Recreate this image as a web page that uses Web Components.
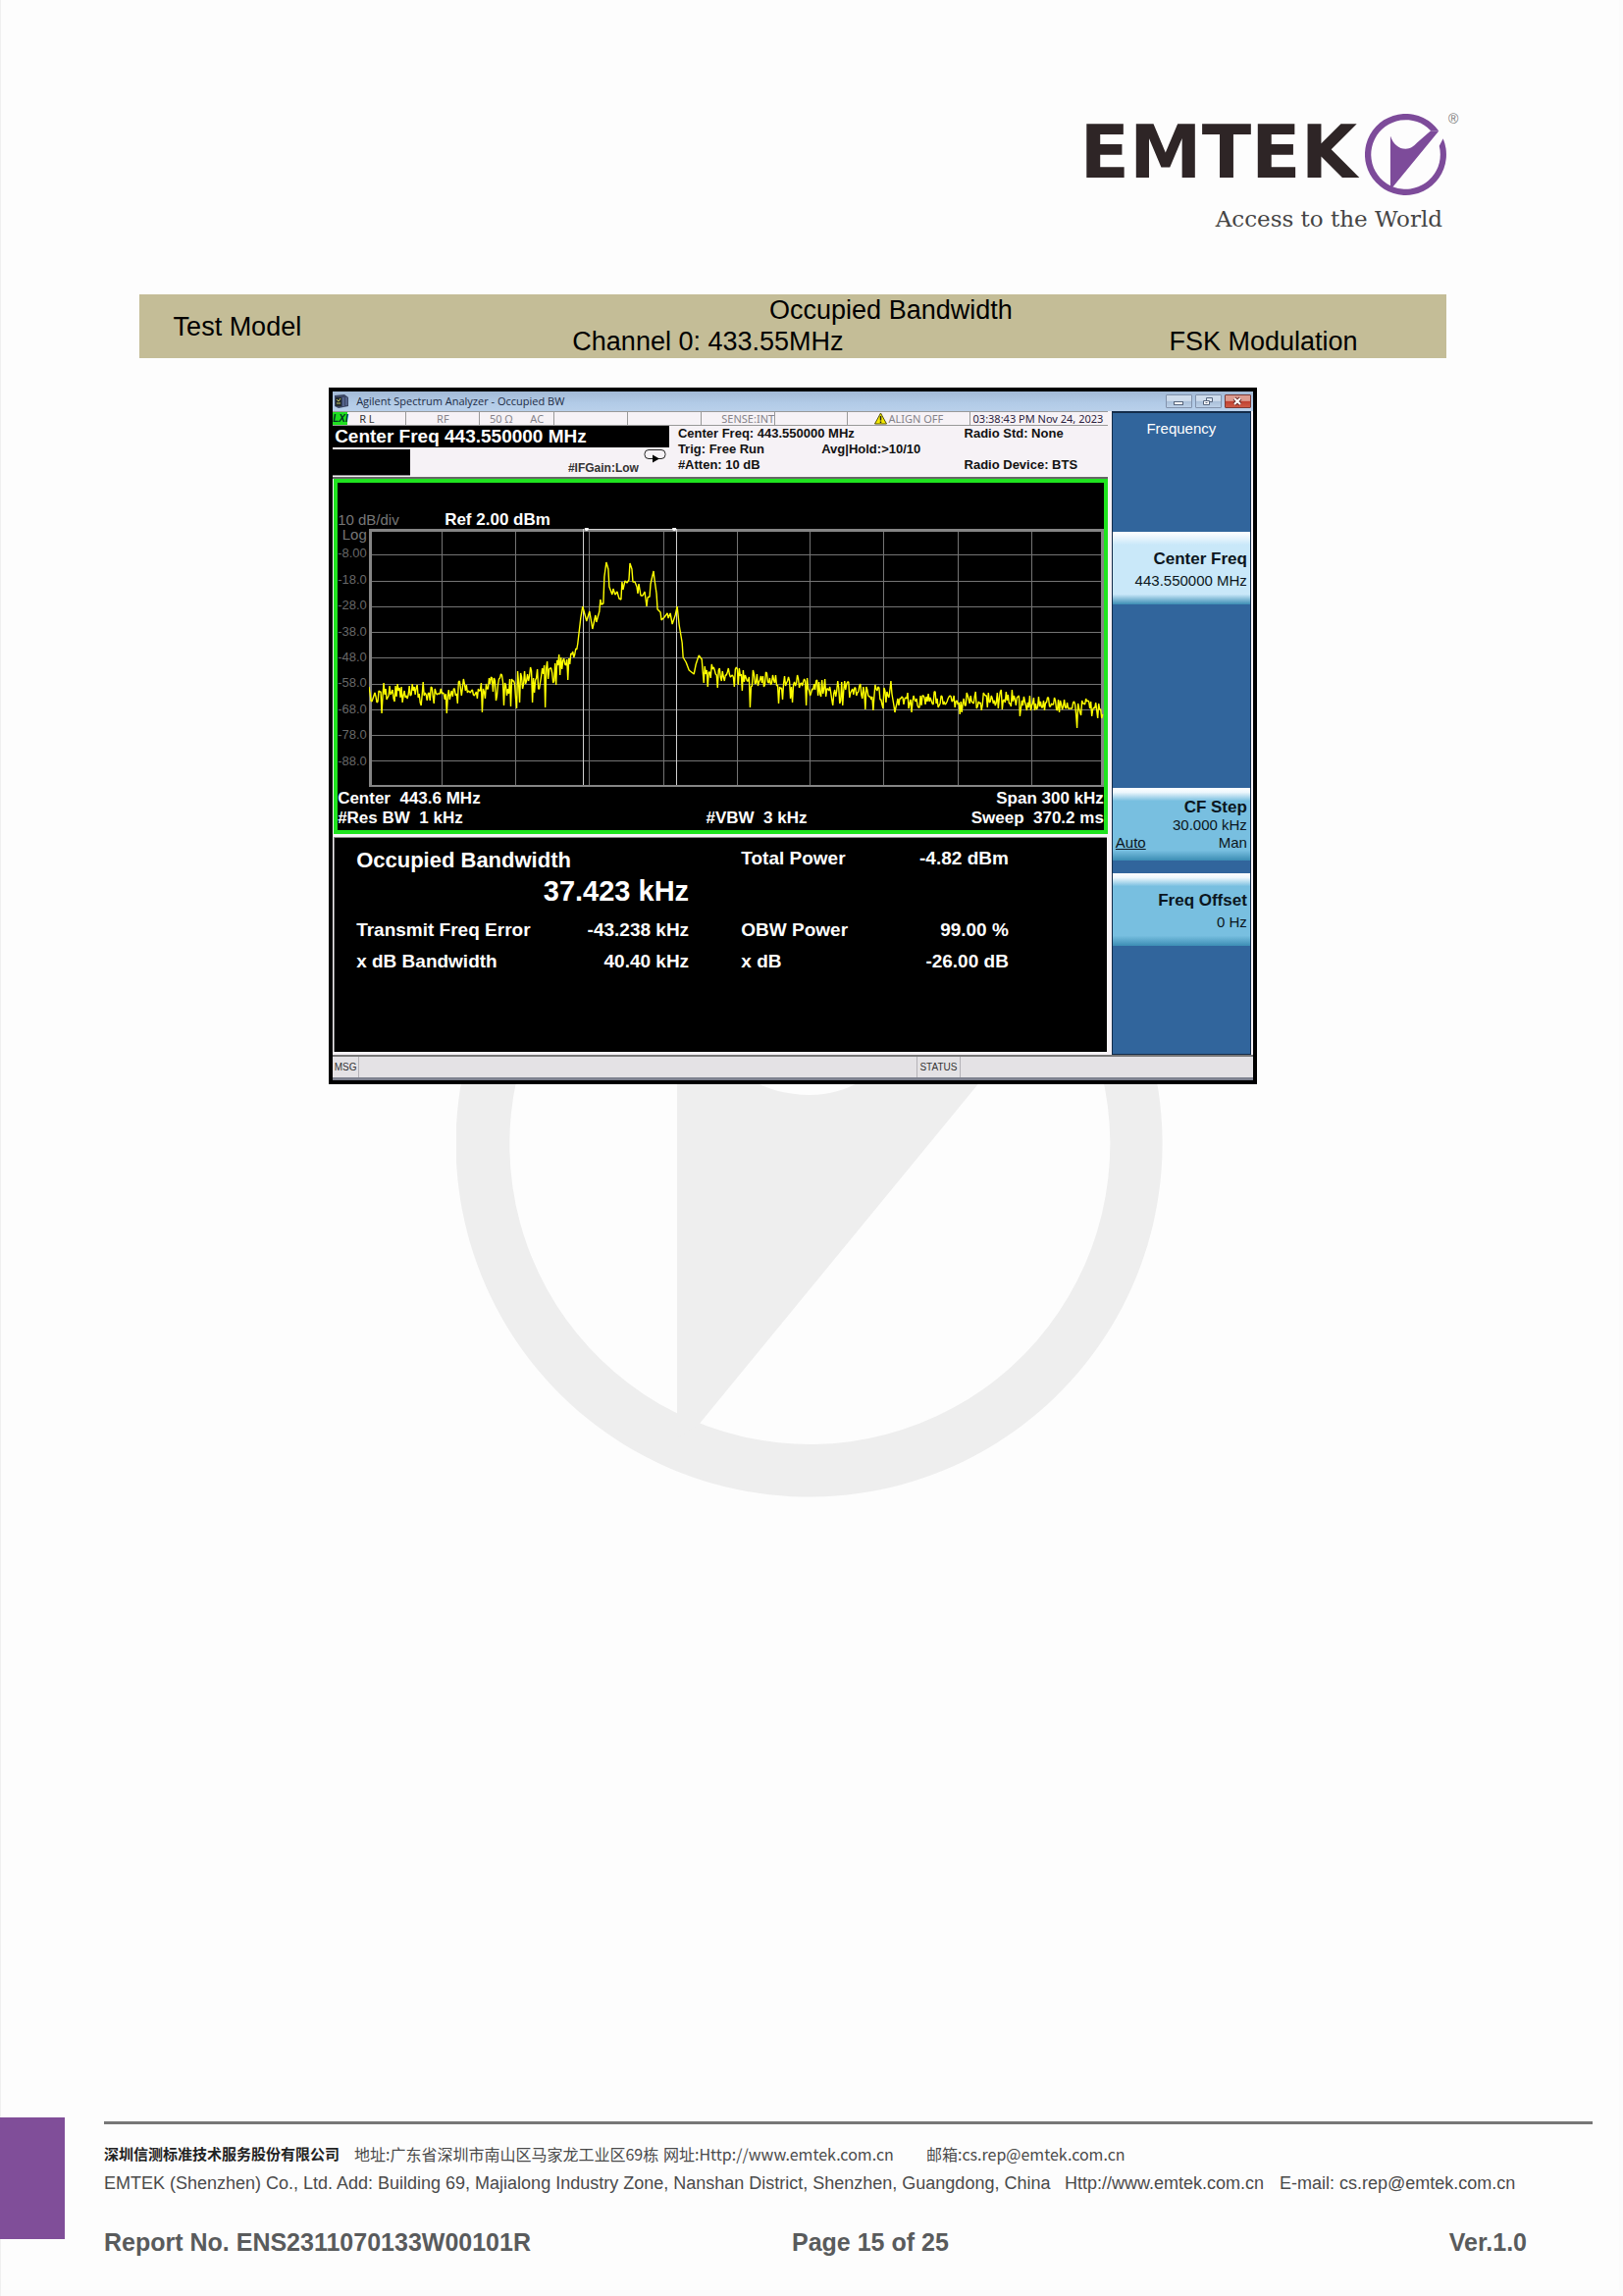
<!DOCTYPE html>
<html lang="en">
<head>
<meta charset="utf-8">
<title>Report No. ENS2311070133W00101R</title>
<style>
  body { margin: 0; background: #fdfdfd; font-family: "Liberation Sans", Arial, sans-serif; }
</style>
</head>
<body>
<report-page></report-page>

<script>
// Base class: renders the static template into an open shadow root
class BaseElement extends HTMLElement {
  constructor() {
    super();
    this.attachShadow({ mode: 'open' });
    this.shadowRoot.innerHTML = this.constructor.template;
  }
}

class EmtekMark extends BaseElement {
  static get template() {
    return `
      <style>
        :host { display: block; }
        svg { display: block; width: 100%; height: auto; }
      </style>
      <svg viewBox="-360 -360 720 720" fill="currentColor" aria-hidden="true">
        <path d="M293 -209 A360 360 0 1 0 331 -141 L297 -75 A306 306 0 1 1 222 -211 Z"/>
        <path d="M-135 -165 C-110 -90 -60 -50 0 -50 C40 -50 72 -72 100 -104 L222 -211 L293 -209 L-113 286 L-135 300 Z"/>
      </svg>
    `;
  }
}
customElements.define('emtek-mark', EmtekMark);

class ReportHeader extends BaseElement {
  static get template() {
    return `
      <style>
        :host { display: flex; flex-direction: column; align-items: flex-end; color: #2e2526; }
        .brand { display: flex; gap: 8px; position: relative; }
        .name { font: bold 74px/78px "DejaVu Sans", sans-serif; }
        emtek-mark { width: 83px; color: #7d4b9a; }
        .reg { position: absolute; left: 100%; top: -5px; padding-left: 2px; font-size: 14px; line-height: 20px; color: #777; }
        .tagline { margin-top: 12px; padding-right: 4px; font: 23px/24px "DejaVu Serif", serif; color: #444; }
      </style>
      <div class="brand">
        <span class="name">EMTEK</span>
        <emtek-mark></emtek-mark>
        <span class="reg">®</span>
      </div>
      <div class="tagline">Access to the World</div>
    `;
  }
}
customElements.define('report-header', ReportHeader);

class ModelBand extends BaseElement {
  static get template() {
    return `
      <style>
        :host { display: block; background: #c4bd97; }
        table { width: 100%; border-collapse: collapse; table-layout: fixed; font-size: 27px; line-height: 32px; color: #000; }
        td, th { padding: 0; text-align: center; font-weight: normal; }
        tr:last-child td { padding-bottom: 1px; }
        .model { width: 15%; }
        .channel { width: 57%; }
      </style>
      <table>
        <colgroup><col class="model"><col class="channel"><col></colgroup>
        <tr><th rowspan="2">Test Model</th><td colspan="2">Occupied Bandwidth</td></tr>
        <tr><td>Channel 0: 433.55MHz</td><td>FSK Modulation</td></tr>
      </table>
    `;
  }
}
customElements.define('model-band', ModelBand);

class TitleBar extends BaseElement {
  static get template() {
    return `
      <style>
        :host {
          display: flex;
          align-items: center;
          height: 20px;
          padding: 0 2px 0 1px;
          gap: 8px;
          background: linear-gradient(#a3bad6, #b2cbe7 60%, #b9d0ea);
          font: 11px/18px "Open Sans", sans-serif;
          color: #1c2b44;
        }
        .text { flex: 1; white-space: nowrap; }
        .buttons { display: flex; gap: 3px; }
        button {
          width: 27px;
          height: 14px;
          padding: 0;
          border: 1px solid #8292ab;
          border-radius: 1px;
          background: linear-gradient(#cfdcec 45%, #a9bfd9 50%, #bdd1e8);
        }
        .close { border-color: #7c3a35; background: linear-gradient(#dd9c90 45%, #bf4030 50%, #cf5b46); }
        svg { display: block; margin: auto; }
      </style>
      <svg width="15" height="14" viewBox="0 0 15 14" aria-hidden="true">
        <path d="M1 1 L11 0 L15 3 V12 L5 14 L1 12 Z" fill="#3b4663"/>
        <path d="M2 3h6v9H2z" fill="#222a2e"/>
        <path d="M3 5l2 2 2-3M3 9h4" stroke="#c5c463" fill="none"/>
        <path d="M10 3v9M13 3v8" stroke="#7181b4"/>
      </svg>
      <span class="text"><slot></slot></span>
      <span class="buttons">
        <button aria-label="Minimize"><svg width="12" height="10"><rect x="1.5" y="5.500" width="9" height="3" fill="#fff" stroke="#56657c"/></svg></button>
        <button aria-label="Restore"><svg width="12" height="10"><path d="M4.500 1.500h6v4h-6z" fill="#dfe7f2" stroke="#56657c"/><path d="M1.500 4.500h6v4h-6z" fill="#fff" stroke="#56657c"/><path d="M3.500 6.500h2" stroke="#56657c"/></svg></button>
        <button class="close" aria-label="Close"><svg width="12" height="10"><path d="M3 2l6 6M9 2l-6 6" stroke="#6c2d2a" stroke-width="4"/><path d="M3 2l6 6M9 2l-6 6" stroke="#fff" stroke-width="2"/></svg></button>
      </span>
    `;
  }
}
customElements.define('title-bar', TitleBar);

class MeasureBar extends BaseElement {
  static get template() {
    return `
      <style>
        :host { display: block; background: #f6f2f6; color: #111; border-bottom: 2px solid #666; }
        .cells {
          display: grid;
          grid-template-columns: 75fr 75fr 75fr 75fr 75fr 75fr 74fr 124fr 140fr;
          border-top: 1px solid #999;
          border-bottom: 1px solid #999;
          height: 13px;
          font: 11px/13px "Noto Sans", sans-serif;
          color: #85838a;
          white-space: nowrap;
        }
        .cells > * { display: flex; justify-content: center; gap: 18px; border-right: 1px solid #999; overflow: hidden; }
        .cells > :first-child { justify-content: flex-start; gap: 12px; color: #333; }
        .cells > :nth-child(6) { justify-content: flex-end; }
        .cells > :nth-child(8) { gap: 2px; }
        .cells > :last-child { border: 0; color: #2c2340; justify-content: flex-start; padding-left: 3px; }
        .lxi { width: 15px; flex: none; background: #1fe01f; color: #032; font: italic bold 10px/13px "Liberation Sans", sans-serif; text-align: center; }
        .main { display: grid; grid-template-columns: 342fr 446fr; height: 52px; }
        .freq { height: 22px; padding-left: 2px; background: #000; color: #fff; font-size: 19px; line-height: 22px; font-weight: bold; white-space: nowrap; }
        .gain { display: flex; margin-top: 2px; height: 28px; justify-content: space-between; }
        .gain .entry { width: 79px; height: 26px; background: #000; border-bottom: 1px solid #888; }
        .gain .low { margin-left: auto; align-self: flex-end; font-size: 12px; line-height: 18px; font-weight: bold; color: #333; }
        .gain svg { margin: 0 3px 0 5px; }
        .info { display: grid; grid-template-columns: 146fr 145fr 146fr; padding-left: 9px; font-size: 13px; line-height: 16px; font-weight: bold; white-space: nowrap; grid-auto-rows: 16px; }
        .wide { grid-column: span 2; }
      </style>
      <div class="cells">
        <span><b class="lxi">LXI</b>R L</span>
        <span>RF</span>
        <span><span>50 Ω</span><span>AC</span></span>
        <span></span><span></span>
        <span>SENSE:INT</span>
        <span></span>
        <span>
          <svg width="13" height="13" viewBox="0 0 13 13" aria-hidden="true"><path d="M6.500 1L12.500 12H.5Z" fill="#f4e800" stroke="#55520a"/><path d="M6.500 4v4.500M6.500 9.500v1.500" stroke="#222" stroke-width="1.500"/></svg>
          ALIGN OFF
        </span>
        <span>03:38:43 PM Nov 24, 2023</span>
      </div>
      <div class="main">
        <div>
          <div class="freq">Center Freq 443.550000 MHz</div>
          <div class="gain">
            <div class="entry"></div>
            <span class="low">#IFGain:Low</span>
            <svg width="23" height="14" viewBox="0 0 23 14" aria-hidden="true"><rect x="1" y=".5" width="21" height="9" rx="4" fill="none" stroke="#222"/><path d="M9 5.500L16 9.500L9 13.500Z" fill="#000"/></svg>
          </div>
        </div>
        <div class="info">
          <span class="wide">Center Freq: 443.550000 MHz</span><span>Radio Std: None</span>
          <span>Trig: Free Run</span><span class="wide">Avg|Hold:&gt;10/10</span>
          <span class="wide">#Atten: 10 dB</span><span>Radio Device: BTS</span>
        </div>
      </div>
    `;
  }
}
customElements.define('measure-bar', MeasureBar);

const WIDTH = 746;
const HEIGHT = 264;

// Mean level left and right of the carrier, as [x, y]
const LEFT_FLOOR = [[0, 170], [40, 169], [75, 169], [110, 164], [150, 158], [180, 149], [190, 144], [200, 138], [208, 130], [213, 119]];
const RIGHT_FLOOR = [[339, 146], [352, 148], [375, 151], [410, 158], [450, 162], [500, 168], [555, 175], [600, 178], [650, 175], [675, 181], [710, 183], [746, 185]];

const CARRIER = [
  [215, 92], [217, 80], [221, 95], [224, 85], [227, 103], [230, 89], [231, 96], [234, 85], [235, 73], [236, 78], [238, 77],
  [239, 50], [241, 35], [243, 42], [244, 60], [247, 68], [248, 62], [250, 68], [252, 65], [254, 72], [256, 73], [257, 55],
  [258, 63], [260, 54], [262, 56], [264, 53], [265, 36], [267, 42], [268, 55], [270, 55], [272, 60], [273, 67], [274, 57],
  [276, 69], [278, 69], [280, 65], [282, 80], [283, 71], [285, 70], [286, 57], [289, 44], [290, 53], [292, 67], [293, 83],
  [296, 86], [297, 94], [300, 91], [303, 87], [304, 92], [306, 87], [308, 98], [311, 89], [313, 80], [315, 99], [318, 117],
  [319, 132], [322, 137], [325, 145], [330, 149], [332, 139], [335, 130], [338, 134]
];

const SPIKES = {
  13: 189, 79: 189, 137: 181, 150: 184, 166: 178, 179: 183, 202: 155, 340: 158, 387: 183, 416: 179,
  430: 178, 444: 181, 471: 181, 530: 156, 551: 188, 602: 188, 653: 165, 661: 192, 719: 204
};

class SpectrumPlot extends BaseElement {
  static get template() {
    return `
      <style>
        :host { display: block; }
        svg { display: block; width: 100%; height: 264px; }
        path, rect { fill: none; vector-effect: non-scaling-stroke; }
        .grid { stroke: #747474; shape-rendering: crispEdges; }
        .frame { stroke: #858585; stroke-width: 3; shape-rendering: crispEdges; }
        .band { stroke: #d0d0d0; shape-rendering: crispEdges; }
        .trace { stroke: #ff0; stroke-width: 1.4; stroke-linejoin: bevel; }
        circle { fill: #fff; }
      </style>
      <svg viewBox="0 0 ${WIDTH} ${HEIGHT}" preserveAspectRatio="none" role="img" aria-label="Spectrum trace">
        <path class="grid"/>
        <rect class="frame" x="1" y="2" width="744" height="261"/>
        <path class="band" d="M218 1V262M312 1V262M220 1H311"/>
        <circle cx="221" cy="1" r="2"/><circle cx="310" cy="1" r="2"/>
        <path class="trace"/>
      </svg>
    `;
  }

  connectedCallback() {
    this.shadowRoot.querySelector('.grid').setAttribute('d', this.gridPath());
    this.shadowRoot.querySelector('.trace').setAttribute('d', this.tracePath());
  }

  gridPath() {
    let d = '';
    for (let i = 1; i < 10; i++) {
      d += `M${Math.round(i * 74.8 - 0.5)} 2V262M2 ${Math.round(1 + i * 26.25)}H744`;
    }
    return d;
  }

  tracePath() {
    let seed = 20;
    const random = () => {
      seed = (seed * 16807) % 2147483647;
      return seed / 2147483647;
    };

    const noisy = (floor, top, bottom) => {
      const points = [];
      for (let i = 1; i < floor.length; i++) {
        const [x0, y0] = floor[i - 1];
        const [x1, y1] = floor[i];
        for (let x = x0; x < x1; x++) {
          const mean = y0 + (y1 - y0) * (x - x0) / (x1 - x0);
          const noise = random() < 0.5 ? -random() * top : random() * random() * bottom;
          points.push([x, SPIKES[x] || Math.round(mean + noise)]);
        }
      }
      return points;
    };

    const points = [
      ...noisy(LEFT_FLOOR.slice(0, 4), 12, 17),
      ...noisy(LEFT_FLOOR.slice(3, 8), 13, 30),
      ...noisy(LEFT_FLOOR.slice(7), 6, 12),
      ...CARRIER,
      ...noisy(RIGHT_FLOOR.slice(0, 7), 11, 19),
      ...noisy(RIGHT_FLOOR.slice(6), 10, 12)
    ];
    return 'M' + points.map(p => p.join(' ')).join('L');
  }
}
customElements.define('spectrum-plot', SpectrumPlot);

class SpectrumScope extends BaseElement {
  static get template() {
    const levels = ['-8.00', '-18.0', '-28.0', '-38.0', '-48.0', '-58.0', '-68.0', '-78.0', '-88.0'];
    return `
      <style>
        :host { display: block; border: 4px solid #1fe31f; background: #000; color: #fff; font-size: 17px; font-weight: bold; }
        .head { display: flex; align-items: flex-end; height: 46px; line-height: 16px; }
        .scale { width: 109px; font-size: 15px; font-weight: normal; color: #777; }
        .body { display: grid; grid-template-columns: 32px 1fr; }
        .levels { display: grid; height: 264px; grid-template-rows: minmax(0, 1fr) repeat(9, minmax(0, 2fr)) minmax(0, 1fr); align-items: center; justify-items: end; padding-right: 5px; font-size: 13px; line-height: 14px; font-weight: normal; color: #686868; }
        .log { font-size: 15px; color: #777; }
        .foot { display: grid; grid-template-columns: 374fr 200fr 204fr; grid-auto-rows: 20px; line-height: 20px; padding: 2px 0; white-space: pre; }
        .end { text-align: right; }
      </style>
      <div class="head"><span class="scale">10 dB/div</span><span>Ref 2.00 dBm</span></div>
      <div class="body">
        <div class="levels"><span class="log">Log</span>${levels.map(l => `<span>${l}</span>`).join('')}</div>
        <spectrum-plot></spectrum-plot>
      </div>
      <div class="foot"><span>Center  443.6 MHz</span><span></span><span class="end">Span 300 kHz</span><span>#Res BW  1 kHz</span><span>#VBW  3 kHz</span><span class="end">Sweep  370.2 ms</span></div>
    `;
  }
}
customElements.define('spectrum-scope', SpectrumScope);

class ResultTable extends BaseElement {
  static get template() {
    return `
      <style>
        :host { display: block; background: #000; color: #fff; border-top: 1px solid #888; border-left: 1px solid #888; padding: 8px 100px 76px 22px; }
        table { width: 100%; border-collapse: collapse; table-layout: fixed; font-size: 19px; line-height: 32px; font-weight: bold; white-space: nowrap; }
        th, td { padding: 0; text-align: left; height: 32px; }
        td { text-align: right; }
        col:nth-child(1) { width: 30%; }
        col:nth-child(2) { width: 21%; }
        col:nth-child(3) { width: 8%; }
        .title { font-size: 22px; line-height: 30px; height: 30px; }
        .total { line-height: 26px; height: 30px; vertical-align: top; }
        .value { font-size: 29px; }
        .gap > * { padding-top: 8px; }
      </style>
      <table>
        <colgroup><col><col><col><col><col></colgroup>
        <tr><th class="title" colspan="2">Occupied Bandwidth</th><td class="total"></td><th class="total">Total Power</th><td class="total">-4.82 dBm</td></tr>
        <tr><td class="value" colspan="2">37.423 kHz</td><td colspan="3"></td></tr>
        <tr class="gap"><th>Transmit Freq Error</th><td>-43.238 kHz</td><td></td><th>OBW Power</th><td>99.00 %</td></tr>
        <tr><th>x dB Bandwidth</th><td>40.40 kHz</td><td></td><th>x dB</th><td>-26.00 dB</td></tr>
      </table>
    `;
  }
}
customElements.define('result-table', ResultTable);

class SoftKey extends BaseElement {
  static get template() {
    return `
      <style>
        :host { display: block; height: 74px; --key: #78bfe0; }
        :host([active]) { --key: #c9e8f9; }
        button {
          display: flex;
          flex-direction: column;
          justify-content: center;
          width: 100%;
          height: 100%;
          padding: 3px 3px 3px;
          border: 0;
          background: linear-gradient(#fff, #eef7fd 6%, var(--key) 18%, var(--key) 86%, #3c8db4);
          font: 15px/18px "Liberation Sans", sans-serif;
          text-align: right;
          color: #0b1620;
        }
        button > * { width: 100%; }
        .label { font-size: 17px; line-height: 26px; font-weight: bold; }
        :host([compact]) .label { line-height: 19px; }
      </style>
      <button><span class="label"><slot name="label"></slot></span><span><slot></slot></span></button>
    `;
  }
}
customElements.define('soft-key', SoftKey);

class SoftMenu extends BaseElement {
  static get template() {
    return `
      <style>
        :host { display: grid; grid-template-rows: 123px repeat(5, 74px) 1fr; row-gap: 13px; background: #31659c; border: 1px solid #132c4a; border-top-width: 2px; box-sizing: border-box; }
        h2 { margin: 0; padding-top: 7px; font-size: 15px; line-height: 18px; font-weight: normal; text-align: center; color: #fff; height: 96px; }
        .center { grid-row: 2; margin-top: -15px; }
        .step { grid-row: 5; margin-top: -15px; }
        .offset { grid-row: 6; margin-top: -15px; }
        .modes { display: flex; justify-content: space-between; }
      </style>
      <h2>Frequency</h2>
      <soft-key class="center" active><span slot="label">Center Freq</span>443.550000 MHz</soft-key>
      <soft-key class="step" compact><span slot="label">CF Step</span>30.000 kHz<span class="modes"><u>Auto</u><span>Man</span></span></soft-key>
      <soft-key class="offset"><span slot="label">Freq Offset</span>0 Hz</soft-key>
    `;
  }
}
customElements.define('soft-menu', SoftMenu);

class AnalyzerWindow extends BaseElement {
  static get template() {
    return `
      <style>
        :host { display: block; border: 4px solid #000; background: #f6f2f6; }
        .work { display: grid; grid-template-columns: 1fr 142px; column-gap: 4px; padding-right: 2px; }
        .left { display: flex; flex-direction: column; }
        spectrum-scope { margin-left: 1px; }
        result-table { flex: 1; margin: 3px 1px 3px 1px; }
        .status { display: grid; grid-template-columns: 27px 567fr 44px 297fr; border-top: 2px solid #777; border-bottom: 3px solid #7e8290; background: #e4e2e5; font-size: 10px; line-height: 21px; color: #333; }
        .status > * { border-right: 1px solid #b5b3b8; text-align: center; height: 21px; }
        .status > :last-child { border: 0; }
      </style>
      <title-bar>Agilent Spectrum Analyzer - Occupied BW</title-bar>
      <div class="work">
        <div class="left">
          <measure-bar></measure-bar>
          <spectrum-scope></spectrum-scope>
          <result-table></result-table>
        </div>
        <soft-menu></soft-menu>
      </div>
      <div class="status"><span>MSG</span><span></span><span>STATUS</span><span></span></div>
    `;
  }
}
customElements.define('analyzer-window', AnalyzerWindow);

class ReportFooter extends BaseElement {
  static get template() {
    return `
      <style>
        :host { display: grid; grid-template-columns: 66px 1fr; column-gap: 40px; padding-right: 31px; color: #4a4a4a; }
        .accent { height: 124px; background: #804e99; }
        .content { margin-top: 4px; border-top: 3px solid #777; padding: 19px 67px 39px 0; white-space: nowrap; }
        .cn { display: grid; grid-template-columns: 255fr 315fr 268fr 612fr; font: 16px/22px "Noto Sans CJK SC", sans-serif; }
        .cn b { font-size: 15px; color: #222; }
        .en { display: grid; grid-template-columns: 237fr 742fr 219fr 252fr; margin-top: 8px; font-size: 18px; line-height: 22px; }
        .page { display: grid; grid-template-columns: 701fr 749fr; margin-top: 33px; font-size: 25px; line-height: 32px; font-weight: bold; color: #595b5c; }
        .page div { display: flex; justify-content: space-between; }
      </style>
      <div class="accent"></div>
      <div class="content">
        <div class="cn"><b>深圳信测标准技术服务股份有限公司</b><span>地址:广东省深圳市南山区马家龙工业区69栋</span><span>网址:Http://www.emtek.com.cn</span><span>邮箱:cs.rep@emtek.com.cn</span></div>
        <div class="en"><span>EMTEK (Shenzhen) Co., Ltd.</span><span>Add: Building 69, Majialong Industry Zone, Nanshan District, Shenzhen, Guangdong, China</span><span>Http://www.emtek.com.cn</span><span>E-mail: cs.rep@emtek.com.cn</span></div>
        <div class="page"><span>Report No. ENS2311070133W00101R</span><div><span>Page 15 of 25</span><span>Ver.1.0</span></div></div>
      </div>
    `;
  }
}
customElements.define('report-footer', ReportFooter);

class ReportPage extends BaseElement {
  static get template() {
    return `
      <style>
        :host { display: flex; flex-direction: column; min-height: 100vh; position: relative; box-shadow: inset 1px 0 #f0f0f0, inset -4px -6px #fbfbfb; }
        .watermark { position: absolute; inset: 0; display: grid; place-items: center; padding: 0 4px 8px 0; color: #eeeeee; }
        .watermark emtek-mark { width: 720px; max-width: 100%; }
        main { position: relative; display: flex; flex-direction: column; padding: 116px 180px 60px 142px; }
        model-band { margin-top: 65px; }
        analyzer-window { width: 71%; margin: 30px auto 0; box-sizing: border-box; }
        report-footer { position: relative; margin-top: auto; }
      </style>
      <div class="watermark"><emtek-mark></emtek-mark></div>
      <main>
        <report-header></report-header>
        <model-band></model-band>
        <analyzer-window></analyzer-window>
      </main>
      <report-footer></report-footer>
    `;
  }
}
customElements.define('report-page', ReportPage);
</script>
</body>
</html>
